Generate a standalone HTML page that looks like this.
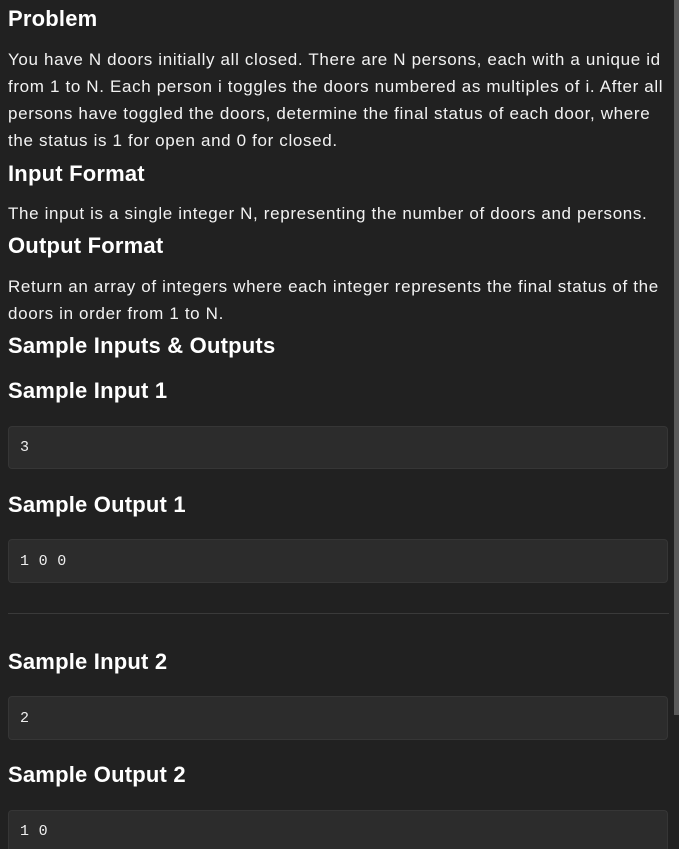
<!DOCTYPE html>
<html><head><meta charset="utf-8"><style>
html,body{margin:0;padding:0;background:#212121;width:679px;height:849px;overflow:hidden;font-family:"Liberation Sans",Arial,sans-serif;color:#f2f2f2}
.a{position:absolute;left:8px;white-space:nowrap}
.h{font-size:22px;font-weight:bold;line-height:30px;color:#fff;letter-spacing:0.2px}
.p{font-size:17px;line-height:27px;letter-spacing:0.65px}
.box{position:absolute;left:8px;width:660px;background:#2c2c2c;border:1px solid #363636;border-radius:4px;box-sizing:border-box}
.box span{position:absolute;left:11px;font-family:"Liberation Mono","DejaVu Sans Mono",monospace;font-size:15px;line-height:20px;color:#eee;letter-spacing:0.3px}
.sb{position:absolute;left:674px;top:0;width:5px;height:715px;background:#5a5a5a}
</style></head><body>
<div class="a h" style="top:4px">Problem</div>
<div class="a p" style="top:46px">You have N doors initially all closed. There are N persons, each with a unique id<br>from 1 to N. Each person i toggles the doors numbered as multiples of i. After all<br>persons have toggled the doors, determine the final status of each door, where<br>the status is 1 for open and 0 for closed.</div>
<div class="a h" style="top:159px">Input Format</div>
<div class="a p" style="top:200px">The input is a single integer N, representing the number of doors and persons.</div>
<div class="a h" style="top:231px">Output Format</div>
<div class="a p" style="top:273px">Return an array of integers where each integer represents the final status of the<br>doors in order from 1 to N.</div>
<div class="a h" style="top:331px">Sample Inputs &amp; Outputs</div>
<div class="a h" style="top:376px">Sample Input 1</div>
<div class="box" style="top:426px;height:43px"><span style="top:11px">3</span></div>
<div class="a h" style="top:490px">Sample Output 1</div>
<div class="box" style="top:539px;height:44px"><span style="top:12px">1 0 0</span></div>
<div style="position:absolute;left:8px;top:613px;width:661px;height:1px;background:#3a3a3a"></div>
<div class="a h" style="top:647px">Sample Input 2</div>
<div class="box" style="top:696px;height:44px"><span style="top:12px">2</span></div>
<div class="a h" style="top:760px">Sample Output 2</div>
<div class="box" style="top:810px;height:39px;border-bottom:none;border-radius:4px 4px 0 0"><span style="top:11px">1 0</span></div>
<div class="sb"></div>
</body></html>
